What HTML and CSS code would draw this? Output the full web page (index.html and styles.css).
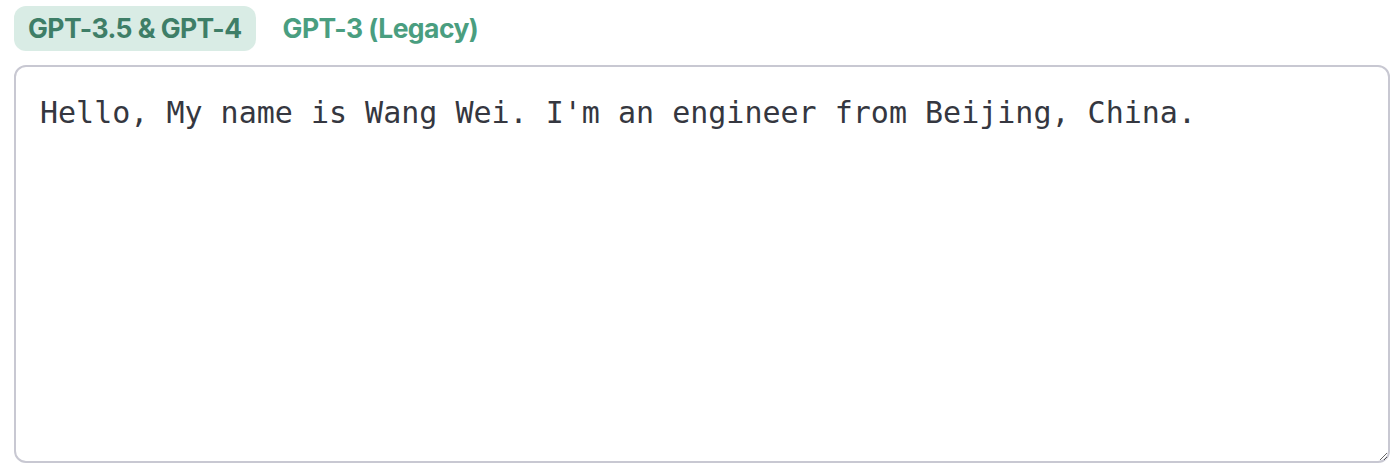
FILE: index.html
```html
<!DOCTYPE html>
<html>
<head>
<meta charset="utf-8">
<link rel="stylesheet" href="styles.css">
</head>
<body>
<div class="page">
  <div class="tabs">
    <span class="tab tab-active">GPT-3.5 &amp; GPT-4</span>
    <span class="tab">GPT-3 (Legacy)</span>
  </div>
  <textarea class="input" spellcheck="false">Hello, My name is Wang Wei. I'm an engineer from Beijing, China.</textarea>
</div>
</body>
</html>
```
FILE: styles.css
```css
html, body {
  margin: 0;
  padding: 0;
  background: #ffffff;
}
.page {
  padding: 6px 6px 0 14px;
  display: flex;
  flex-direction: column;
  gap: 14px;
}
.tabs {
  display: flex;
  gap: 13px;
  align-items: center;
}
.tab {
  font-family: Inter, "Noto Sans", sans-serif;
  font-weight: 650;
  font-size: 26.5px;
  letter-spacing: -0.55px;
  color: #4a9e80;
  height: 45px;
  line-height: 45px;
  padding: 0 14px;
  border-radius: 12px;
  box-sizing: border-box;
}
.tab-active {
  background: #d9ece5;
  color: #3e7e67;
}
.input {
  display: block;
  width: 1376px;
  height: 398px;
  box-sizing: border-box;
  border: 2px solid #c8c8d2;
  border-radius: 12px;
  padding: 22px 24px;
  font-family: "DejaVu Sans Mono", "Liberation Mono", monospace;
  font-size: 30px;
  line-height: 48px;
  color: #353740;
  resize: vertical;
  outline: none;
  margin: 0;
}
```
